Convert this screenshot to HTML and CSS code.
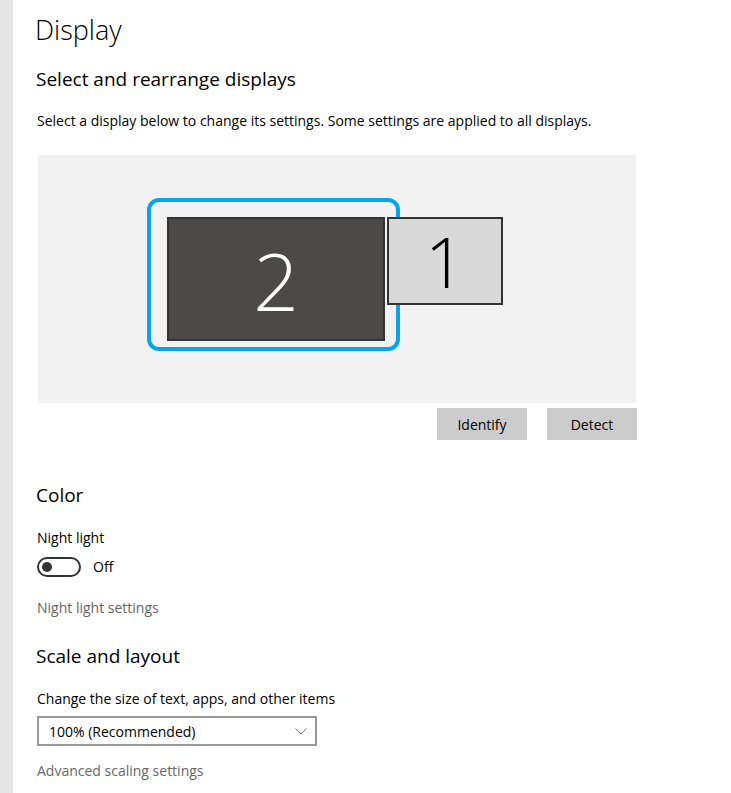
FILE: index.html
```html
<!DOCTYPE html>
<html lang="en">
<head>
<meta charset="utf-8">
<title>Display</title>
<link rel="stylesheet" href="styles.css">
</head>
<body>
<div class="page">
  <aside class="rail"></aside>
  <main class="content">
    <h1 class="title">Display</h1>
    <h2 class="section first">Select and rearrange displays</h2>
    <p class="desc">Select a display below to change its settings. Some settings are applied to all displays.</p>

    <div class="arrange">
      <div class="ring"></div>
      <div class="monitor mon2">2</div>
      <div class="monitor mon1">1</div>
    </div>

    <div class="actions">
      <button class="btn">Identify</button>
      <button class="btn">Detect</button>
    </div>

    <h2 class="section color">Color</h2>
    <p class="label nl">Night light</p>
    <div class="toggle-row">
      <span class="toggle"><span class="knob"></span></span>
      <span class="toggle-text">Off</span>
    </div>
    <a class="link nls">Night light settings</a>

    <h2 class="section scale">Scale and layout</h2>
    <p class="label size">Change the size of text, apps, and other items</p>
    <div class="select">
      <span class="select-value">100% (Recommended)</span>
      <svg class="chev" width="12" height="7" viewBox="0 0 12 7"><path d="M0.5 0.5 L6 6 L11.5 0.5" fill="none" stroke="#7a7a7a" stroke-width="1"/></svg>
    </div>
    <a class="link adv">Advanced scaling settings</a>
  </main>
</div>
</body>
</html>
```

FILE: styles.css
```css
html, body {
  margin: 0;
  padding: 0;
  background: #ffffff;
}
body {
  font-family: "Open Sans", "Noto Sans", sans-serif;
  color: #000;
  font-size: 14px;
}
.page {
  display: flex;
  min-height: 793px;
}
.rail {
  width: 13px;
  flex: 0 0 13px;
  background: #e6e6e6;
}
.content {
  flex: 1;
  padding-left: 24px;
  display: flex;
  flex-direction: column;
  align-items: flex-start;
}
.title {
  margin: 12px 0 0 -2px;
  font-size: 27px;
  font-weight: 300;
  line-height: 36px;
}
.section {
  margin: 0 0 0 -1px;
  font-size: 19px;
  font-weight: 400;
  line-height: 28px;
}
.section.first { margin-top: 17px; }
.desc, .label {
  margin: 0;
  font-size: 14px;
  line-height: 20px;
}
.desc { margin-top: 18px; }
.arrange {
  position: relative;
  margin: 24px 0 0 1px;
  width: 598px;
  height: 248px;
  background: #f2f2f2;
}
.ring {
  position: absolute;
  left: 109px;
  top: 43px;
  width: 245px;
  height: 145px;
  border: 4px solid #05a5e8;
  border-radius: 12px;
}
.monitor {
  position: absolute;
  top: 62px;
  box-sizing: border-box;
  border: 2px solid #333333;
  display: flex;
  align-items: center;
  justify-content: center;
  font-weight: 300;
}
.mon2 {
  left: 129px;
  width: 218px;
  height: 124px;
  background: #4c4a48;
  color: #ffffff;
  font-size: 80px;
}
.mon1 {
  left: 349px;
  width: 116px;
  height: 88px;
  background: #d9d9d9;
  color: #000;
  font-size: 70px;
}
.actions {
  margin-top: 5px;
  width: 600px;
  display: flex;
  justify-content: flex-end;
  gap: 20px;
}
.btn {
  width: 90px;
  height: 32px;
  border: none;
  background: #cccccc;
  font-family: inherit;
  font-size: 14px;
  color: #000;
  padding: 0;
}
.section.color { margin-top: 41px; }
.label.nl { margin-top: 19px; }
.toggle-row {
  margin-top: 9px;
  display: flex;
  align-items: center;
  gap: 12px;
  height: 20px;
}
.toggle {
  box-sizing: border-box;
  width: 44px;
  height: 20px;
  border: 2px solid #333333;
  border-radius: 10px;
  display: flex;
  align-items: center;
  padding-left: 3px;
}
.knob {
  width: 10px;
  height: 10px;
  border-radius: 50%;
  background: #333333;
}
.toggle-text { font-size: 14px; line-height: 20px; }
.link {
  font-size: 14px;
  line-height: 20px;
  color: #666666;
}
.link.nls { margin-top: 21px; }
.section.scale { margin-top: 24px; }
.label.size { margin-top: 19px; }
.select {
  margin-top: 7px;
  box-sizing: border-box;
  width: 280px;
  height: 30px;
  border: 2px solid #999999;
  display: flex;
  align-items: center;
  justify-content: space-between;
  padding: 0 8px 0 10px;
}
.select-value { font-size: 14px; }
.link.adv { margin-top: 15px; }
```
